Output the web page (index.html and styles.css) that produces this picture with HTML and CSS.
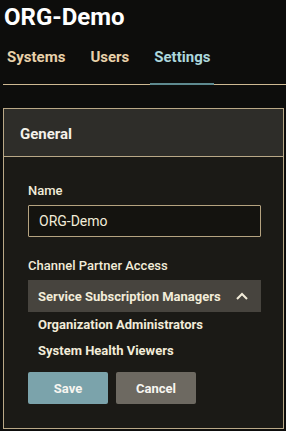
FILE: index.html
```html
<!DOCTYPE html>
<html lang="en">
<head>
  <meta charset="UTF-8" />
  <title>ORG-Demo</title>
  <link rel="stylesheet" href="styles.css">
</head>
<body>

<h1 class="org-title">ORG-Demo</h1>

<div class="tabs">
  <div class="tab">Systems</div>
  <div class="tab">Users</div>
  <div class="tab active">Settings</div>
</div>

<div class="card">
  <div class="card-header">General</div>
  <div class="card-body">
    <label class="field-label" for="orgName">Name</label>
    <input class="text-input" id="orgName" type="text" value="ORG-Demo" />

    <div class="field-label spaced">Channel Partner Access</div>
    <div class="select-head">
      <span>Service Subscription Managers</span>
      <svg class="chevron" width="12" height="8" viewBox="0 0 12 8">
        <polyline points="1,7 6,2 11,7" fill="none" stroke="#f2ecd9" stroke-width="2" />
      </svg>
    </div>
    <div class="select-item">Organization Administrators</div>
    <div class="select-item">System Health Viewers</div>

    <div class="actions">
      <button class="btn btn-save">Save</button>
      <button class="btn btn-cancel">Cancel</button>
    </div>
  </div>
</div>

</body>
</html>
```

FILE: styles.css
```css
body {
  margin: 0;
  background: #0d0d0c;
  font-family: Roboto, 'Liberation Sans', sans-serif;
  color: #f2ecd9;
}

.org-title {
  margin: 3px 0 0 4px;
  font-size: 24px;
  line-height: 28px;
  font-weight: 700;
  color: #ffffff;
}

.tabs {
  display: flex;
  gap: 17px;
  margin: 16px 0 0 3px;
  height: 37px;
  border-bottom: 1px solid #cdb892;
}

.tab {
  padding: 0 4px 15px;
  height: 21px;
  line-height: 20px;
  font-size: 15px;
  font-weight: 700;
  color: #e8d1aa;
  border-bottom: 2px solid transparent;
  margin-bottom: -1px;
}

.tab.active {
  color: #acd7dc;
  border-bottom-color: #5e8a90;
}

.card {
  margin: 23px 2px 0 3px;
  border: 1px solid #b9a887;
  background: #1b1a16;
}

.card-header {
  background: #2e2d29;
  border-bottom: 1px solid #b9a887;
  padding: 3px 16px 0;
  line-height: 44px;
  font-size: 15px;
  font-weight: 700;
  color: #f4f1ea;
}

.card-body {
  padding: 26px 22px 24px 24px;
}

.field-label {
  display: block;
  font-size: 13px;
  line-height: 16px;
  font-weight: 500;
  color: #f2ecd9;
}

.field-label.spaced {
  margin-top: 21px;
}

.text-input {
  display: block;
  box-sizing: border-box;
  width: 100%;
  height: 32px;
  margin-top: 6px;
  padding: 0 10px;
  background: #14130f;
  border: 1px solid #b5a380;
  border-radius: 1px;
  font-family: Roboto, 'Liberation Sans', sans-serif;
  font-size: 14px;
  color: #f2ecd9;
}

.select-head {
  display: flex;
  justify-content: space-between;
  align-items: center;
  height: 32px;
  margin-top: 6px;
  padding: 0 13px 0 10px;
  background: #47443e;
  font-size: 13px;
  font-weight: 700;
  color: #f2ecd9;
}

.chevron {
  display: block;
}

.select-item {
  padding-left: 10px;
  line-height: 26px;
  font-size: 13px;
  font-weight: 700;
  color: #f2ecd9;
}

.actions {
  display: flex;
  gap: 8px;
  margin-top: 8px;
}

.btn {
  width: 80px;
  height: 32px;
  border: none;
  border-radius: 2px;
  font-family: Roboto, 'Liberation Sans', sans-serif;
  font-size: 13px;
  font-weight: 700;
  color: #f7f5f0;
}

.btn-save {
  background: #7ba3ab;
}

.btn-cancel {
  background: #6d6961;
}
```
